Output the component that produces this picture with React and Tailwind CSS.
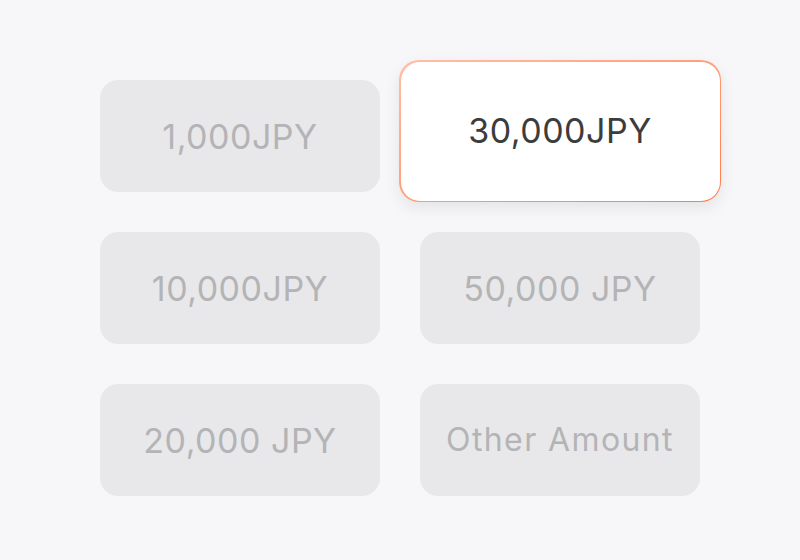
const amounts = [
  { label: '1,000JPY' },
  { label: '30,000JPY', selected: true },
  { label: '10,000JPY' },
  { label: '50,000 JPY' },
  { label: '20,000 JPY' },
  { label: 'Other Amount', small: true },
];

export default function App() {
  return (
    <div className="w-[800px] h-[560px] bg-[#f7f7f9] pt-[80px] pl-[100px]" style={{ fontFamily: 'Inter, "Noto Sans", sans-serif' }}>
      <div className="grid grid-cols-[280px_280px] auto-rows-[112px] gap-x-[40px] gap-y-[40px]">
        {amounts.map((a) =>
          a.selected ? (
            <div
              key={a.label}
              className="-mx-[21px] -mt-[20px] -mb-[10px] rounded-[20px] p-[1.5px] bg-gradient-to-br from-[#ffbfa8] to-[#ff7a45] shadow-[0_6px_16px_rgba(0,0,0,0.08)]"
            >
              <div className="h-full rounded-[19px] bg-white flex items-center justify-center pb-[2px] text-[34px] text-[#3c3c3c] tracking-[0.5px]">
                {a.label}
              </div>
            </div>
          ) : (
            <div
              key={a.label}
              className={`rounded-[18px] bg-[#e8e8ea] flex items-center justify-center text-[#b4b4b6] ${a.small ? 'text-[32px] tracking-[1.4px]' : 'text-[34px] tracking-[0.5px]'}`}
            >
              {a.label}
            </div>
          )
        )}
      </div>
    </div>
  );
}
